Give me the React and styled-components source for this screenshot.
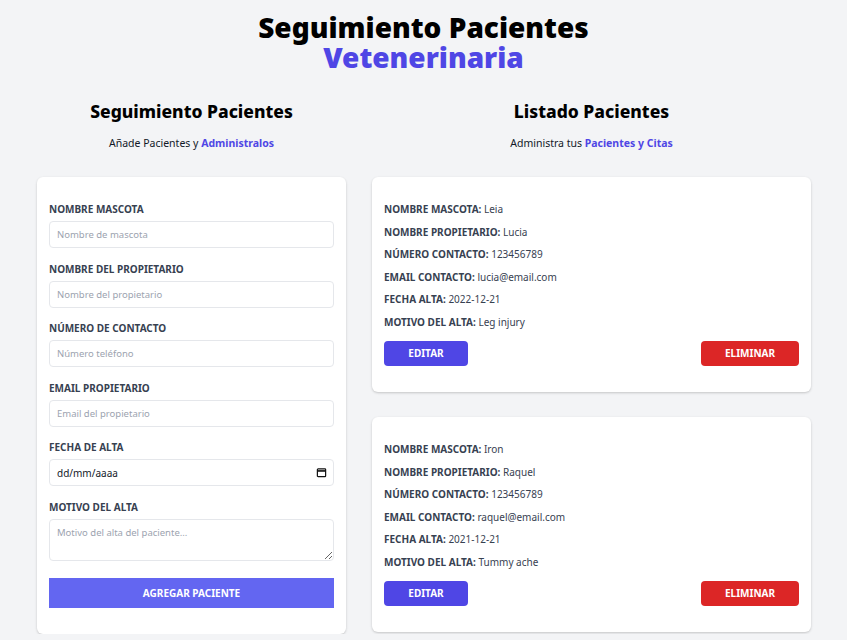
import React from 'react'
import styled, { createGlobalStyle } from 'styled-components'

const GlobalStyle = createGlobalStyle`
  * { box-sizing: border-box; }
  body {
    margin: 0;
    background: #f3f4f6;
    font-family: "Noto Sans", "Open Sans", sans-serif;
    color: #111827;
  }
`

const Page = styled.div`
  padding-top: 12px;
`

const Title = styled.h1`
  margin: 0;
  text-align: center;
  font-size: 28px;
  line-height: 30px;
  font-weight: 900;
  color: #000;
`

const Accent = styled.span`
  display: block;
  color: #4f46e5;
`

const Columns = styled.div`
  display: flex;
  gap: 26px;
  padding: 0 36px 0 37px;
  margin-top: 26px;
  align-items: flex-start;
`

const Column = styled.div`
  flex: ${p => (p.$wide ? '1 1 auto' : '0 0 309px')};
`

const Heading = styled.h2`
  margin: 0;
  text-align: center;
  font-size: 17.5px;
  line-height: 26px;
  font-weight: 800;
  color: #000;
`

const Sub = styled.p`
  margin: 11px 0 26px;
  text-align: center;
  font-size: 10.5px;
  line-height: 16px;
  color: #111827;
`

const Link = styled.span`
  color: #4f46e5;
  font-weight: 700;
`

const Card = styled.div`
  background: #fff;
  border-radius: 6px;
  box-shadow: 0 1px 3px rgba(0, 0, 0, 0.12), 0 1px 2px rgba(0, 0, 0, 0.08);
  padding: 25px 12px 26px;
  margin-bottom: ${p => (p.$gap ? '25px' : '0')};
`

const Field = styled.div`
  margin-bottom: 13.5px;
`

const Label = styled.label`
  display: block;
  font-size: 10px;
  line-height: 14px;
  font-weight: 700;
  text-transform: uppercase;
  color: #374151;
  margin-bottom: 5px;
`

const Input = styled.input`
  display: block;
  width: 100%;
  height: 27px;
  border: 1px solid #e5e7eb;
  border-radius: 4px;
  padding: 0 7px;
  font-family: inherit;
  font-size: 9.5px;
  color: #111827;
  background: #fff;
  outline: none;
  &::placeholder { color: #9ca3af; }
`

const DateBox = styled.div`
  display: flex;
  align-items: center;
  justify-content: space-between;
  height: 27px;
  border: 1px solid #e5e7eb;
  border-radius: 4px;
  padding: 0 6px 0 7px;
  background: #fff;
`

const DateText = styled.input`
  flex: 1;
  border: none;
  outline: none;
  padding: 0;
  font-family: inherit;
  font-size: 10px;
  background: transparent;
  &::placeholder { color: #111827; }
`

const TextArea = styled.textarea`
  display: block;
  width: 100%;
  height: 42px;
  border: 1px solid #e5e7eb;
  border-radius: 4px;
  padding: 6px 7px;
  font-family: inherit;
  font-size: 9.5px;
  resize: vertical;
  outline: none;
  &::placeholder { color: #9ca3af; }
`

const Submit = styled.button`
  display: block;
  width: 100%;
  height: 30px;
  margin-top: 17px;
  border: none;
  background: #6366f1;
  color: #fff;
  font-family: inherit;
  font-size: 10px;
  font-weight: 700;
  text-transform: uppercase;
`

const Line = styled.p`
  margin: 0 0 8.6px;
  font-size: 10px;
  line-height: 14px;
  color: #374151;
  font-weight: 700;
  text-transform: uppercase;
`

const Value = styled.span`
  font-weight: 400;
  text-transform: none;
  color: #374151;
`

const Actions = styled.div`
  display: flex;
  justify-content: space-between;
  margin-top: 12px;
`

const Action = styled.button`
  width: ${p => (p.$danger ? '98px' : '84px')};
  height: 25px;
  border: none;
  border-radius: 4px;
  background: ${p => (p.$danger ? '#dc2626' : '#4f46e5')};
  color: #fff;
  font-family: inherit;
  font-size: 10px;
  font-weight: 700;
  text-transform: uppercase;
`

const CalendarIcon = () => (
  <svg width="11" height="11" viewBox="0 0 12 12" fill="none" stroke="#111" strokeWidth="1.3">
    <rect x="1.5" y="2" width="9" height="8.5" rx="0.8" />
    <line x1="1.5" y1="4.3" x2="10.5" y2="4.3" strokeWidth="1.8" />
  </svg>
)

const pacientes = [
  { mascota: 'Leia', propietario: 'Lucia', tel: '123456789', email: 'lucia@email.com', fecha: '2022-12-21', motivo: 'Leg injury' },
  { mascota: 'Iron', propietario: 'Raquel', tel: '123456789', email: 'raquel@email.com', fecha: '2021-12-21', motivo: 'Tummy ache' },
]

const Paciente = ({ p, gap }) => (
  <Card $gap={gap}>
    <Line>Nombre mascota: <Value>{p.mascota}</Value></Line>
    <Line>Nombre propietario: <Value>{p.propietario}</Value></Line>
    <Line>Número contacto: <Value>{p.tel}</Value></Line>
    <Line>Email contacto: <Value>{p.email}</Value></Line>
    <Line>Fecha alta: <Value>{p.fecha}</Value></Line>
    <Line>Motivo del alta: <Value>{p.motivo}</Value></Line>
    <Actions>
      <Action>Editar</Action>
      <Action $danger>Eliminar</Action>
    </Actions>
  </Card>
)

export default function App() {
  return (
    <Page>
      <GlobalStyle />
      <Title>
        Seguimiento Pacientes
        <Accent>Vetenerinaria</Accent>
      </Title>
      <Columns>
        <Column>
          <Heading>Seguimiento Pacientes</Heading>
          <Sub>Añade Pacientes y <Link>Administralos</Link></Sub>
          <Card>
            <Field>
              <Label>Nombre mascota</Label>
              <Input placeholder="Nombre de mascota" />
            </Field>
            <Field>
              <Label>Nombre del propietario</Label>
              <Input placeholder="Nombre del propietario" />
            </Field>
            <Field>
              <Label>Número de contacto</Label>
              <Input placeholder="Número teléfono" />
            </Field>
            <Field>
              <Label>Email propietario</Label>
              <Input placeholder="Email del propietario" />
            </Field>
            <Field>
              <Label>Fecha de alta</Label>
              <DateBox>
                <DateText placeholder="dd/mm/aaaa" />
                <CalendarIcon />
              </DateBox>
            </Field>
            <Field>
              <Label>Motivo del alta</Label>
              <TextArea placeholder="Motivo del alta del paciente..." />
            </Field>
            <Submit>Agregar paciente</Submit>
          </Card>
        </Column>
        <Column $wide>
          <Heading>Listado Pacientes</Heading>
          <Sub>Administra tus <Link>Pacientes y Citas</Link></Sub>
          {pacientes.map((p, i) => (
            <Paciente key={i} p={p} gap={i === 0} />
          ))}
        </Column>
      </Columns>
    </Page>
  )
}
